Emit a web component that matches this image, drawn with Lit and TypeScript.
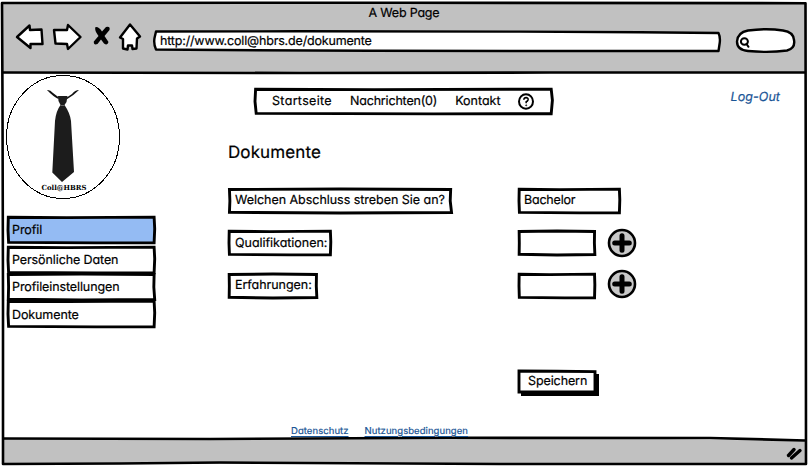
import { LitElement, html, css, svg } from "lit";
import { customElement, property } from "lit/decorators.js";

const OUTLINES: Record<string, string> = {
  a: "M0.2 2 L50 0 L99.4 2 L99.2 50 L99.8 98 L50 100 L0.2 97 L0.4 50 Z",
  b: "M0.2 1 L40 2.5 L99.4 0.5 L99.8 45 L99.4 99 L60 99.5 L0.4 97.5 L0 50 Z",
  c: "M0 0 L50 1 L100 3 L100 100 L0 100 Z",
};

/** Frame with a slightly wobbly hand-drawn outline that stretches to its content. */
@customElement("sketch-box")
export class SketchBox extends LitElement {
  @property() shape = "a";
  @property() fill = "#fff";
  static styles = css`
    :host { display: flex; align-items: center; position: relative; box-sizing: border-box; }
    svg { position: absolute; inset: 1.5px; width: calc(100% - 3px); height: calc(100% - 3px); overflow: visible; }
    path { stroke: #000; stroke-width: 2.9; stroke-linejoin: miter; vector-effect: non-scaling-stroke; }
    .content { position: relative; display: flex; align-items: center; width: 100%; }
  `;
  render() {
    return html`<svg viewBox="0 0 100 100" preserveAspectRatio="none"><path d=${OUTLINES[this.shape]} fill=${this.fill}></path></svg>
      <div class="content"><slot></slot></div>`;
  }
}

@customElement("browser-toolbar")
export class BrowserToolbar extends LitElement {
  static styles = css`
    :host { display: flex; flex-direction: column; height: 73px; box-sizing: border-box; padding: 5px 12px 0 15px; }
    .title { text-align: center; height: 17px; line-height: 18px; letter-spacing: -0.2px; margin-right: 3px; }
    .bar { display: flex; align-items: flex-start; }
    svg { display: block; flex: none; overflow: visible; }
    .ink { fill: #fff; stroke: #000; stroke-width: 2.4; stroke-linejoin: round; stroke-linecap: round; }
    .url { position: relative; width: 568px; height: 24px; margin: 7px 0 0 10px; }
    .url span { position: relative; display: block; padding-left: 7px; line-height: 25px; letter-spacing: -0.17px; }
    .url svg { position: absolute; inset: 0; }
    .search { margin: 6px 0 0 13px; }
  `;
  render() {
    return html`
      <div class="title">A Web Page</div>
      <div class="bar">
        <svg width="128" height="30" viewBox="15 22 128 30">
          <g class="ink">
            <path d="M17 37 L29.500 25.500 L30 30 L41.500 29.500 L42.500 44 L30.500 44 L30.500 48 Z"></path>
            <path d="M54 30 L67 30 L68 25 L80.500 37 L68 49 L67 44 L55.500 43.500 Z"></path>
            <path d="M130 24.500 L140 36.500 L137 38.500 L136.500 48.500 L132.500 49 L132 45.500 L128 45.500 L127.500 49.500 L123 48.500 L123 39 L120 37.500 Z"></path>
          </g>
          <path d="M95.500 27 Q99 26.500 102 31.500 L106 27 Q110.500 26 109.500 30 L104.500 36 L108.500 42 Q107.500 46 104 43.500 L101 39.500 L97.500 44 Q93.500 45.500 93.800 41.500 L98.500 36 Q94 30 95.500 27 Z"></path>
        </svg>
        <div class="url">
          <svg width="568" height="24" viewBox="153 29 568 24">
            <path class="ink" d="M156 31.500 L300 31.300 L520 31.600 L640 32.200 L718.500 33 Q720.500 37 719.700 43 L718.500 51 L560 51 L370 50.800 L220 50 L156 49.500 Q153.500 44 154.500 38 Z"></path>
          </svg>
          <span>http://www.coll@hbrs.de/dokumente</span>
        </div>
        <svg class="search" width="62" height="26" viewBox="734 28 62 26">
          <path class="ink" d="M748 30.500 Q767 28 783 30.500 Q793.500 32 794 40 Q795.500 48 787 50.500 Q769 53 748 51 Q737 50 737 41.500 Q737.500 32.500 748 30.500 Z"></path>
          <g fill="none" stroke="#000" stroke-width="2" stroke-linecap="round">
            <ellipse cx="744.400" cy="41.500" rx="3.500" ry="3.300"></ellipse>
            <path d="M746.500 44 L748.500 46.800"></path>
          </g>
        </svg>
      </div>`;
  }
}

@customElement("club-logo")
export class ClubLogo extends LitElement {
  static styles = css`
    :host { display: block; width: 116px; height: 126px; }
    svg { display: block; }
    text { font: 700 7px "DejaVu Serif", serif; }
  `;
  render() {
    return html`<svg width="116" height="126" viewBox="5 74 116 126">
      <ellipse cx="63" cy="137" rx="56.5" ry="61.5" fill="#fff" stroke="#000" shape-rendering="crispEdges"></ellipse>
      <path d="M47 90 Q50 89.500 53 93 L59 97.500 L58.500 99 Q53 96.500 47 90 Z M79 90 Q75 90 72 94 L66 98 L66.500 99.500 Q73 96 79 90 Z" fill="#111"></path>
      <path d="M58 96 L67.500 96 L66.500 102 L64.500 105 Q70 113 71 121 L74 172 L62 182 L52.300 172.500 L55 121 Q56 111 60.500 105 L58.500 101 Z" fill="#1c1c1c"></path>
      <path d="M60.500 105.500 L64.500 105.500" stroke="#777" stroke-width=".8"></path>
      <text x="41.500" y="190.300" textLength="45" lengthAdjust="spacingAndGlyphs">Coll@HBRS</text>
    </svg>`;
  }
}

@customElement("side-menu")
export class SideMenu extends LitElement {
  static styles = css`
    :host { display: flex; flex-direction: column; width: 150px; }
    sketch-box { height: 29px; }
    .item { padding: 1px 0 0 6px; letter-spacing: -0.1px; }
    .list .item { padding-top: 2px; }
    .list { display: flex; flex-direction: column; margin-top: 1px; }
    .list sketch-box + sketch-box { margin-top: -1.7px; }
  `;
  render() {
    return html`
      <sketch-box shape="b" fill="#94bbf3"><span class="item">Profil</span></sketch-box>
      <div class="list">
        ${["Persönliche Daten", "Profileinstellungen", "Dokumente"].map(
          (t, i) => html`<sketch-box shape=${i % 2 ? "a" : "b"}><span class="item">${t}</span></sketch-box>`
        )}
      </div>`;
  }
}

const plus = svg`<circle cx="15" cy="15" r="13" fill="#c8c8c8" stroke="#000" stroke-width="2.600"></circle>
  <path d="M15 7.700 V22.300 M7.700 15 H22.300" stroke="#000" stroke-width="5" stroke-linecap="round"></path>`;

@customElement("document-form")
export class DocumentForm extends LitElement {
  static styles = css`
    :host { display: grid; grid-template-columns: 290px auto; justify-content: start; grid-auto-rows: 42.5px; align-items: start; }
    sketch-box { height: 27px; }
    .label span, .value span { padding-left: 8px; white-space: nowrap; letter-spacing: -0.03px; }
    .w0 { width: 226px; }
    .w1 { width: 105px; }
    .w2 { width: 91px; }
    .value { width: 79px; }
    .wide { width: 104px; }
    .value span { padding-left: 7px; letter-spacing: -0.2px; }
    .field { display: flex; gap: 11px; height: 27px; }
    svg { display: block; margin-top: -2px; }
    .i2 svg { margin-top: -3.5px; }
  `;
  render() {
    const rows = ["Welchen Abschluss streben Sie an?", "Qualifikationen:", "Erfahrungen:"];
    return html`${rows.map(
      (label, i) => html`
        <sketch-box class="label w${i}" shape=${i % 2 ? "b" : "a"}><span>${label}</span></sketch-box>
        <div class="field i${i}">
          <sketch-box class="value ${i ? "" : "wide"}" shape=${i % 2 ? "a" : "b"}>${i ? "" : html`<span>Bachelor</span>`}</sketch-box>
          ${i ? html`<svg width="30" height="30">${plus}</svg>` : ""}
        </div>`
    )}`;
  }
}

@customElement("app-root")
export class AppRoot extends LitElement {
  static styles = css`
    :host { display: block; position: relative; width: 808px; height: 466px; overflow: hidden; background: #fff; color: #000;
      font: 12.5px Inter, "Open Sans", sans-serif; font-feature-settings: "cv11" 1;
      text-rendering: geometricPrecision; -webkit-text-stroke: 0.2px currentColor; }
    .frame { position: absolute; inset: 0; }
    .window { position: relative; display: flex; flex-direction: column; height: 466px; }
    .page { display: grid; grid-template-columns: 222px 1fr; flex: 1; padding: 1px 28px 0 5px; }
    side-menu { margin: 15px 0 0 1px; }
    .top { display: flex; justify-content: space-between; align-items: flex-start; height: 28px; padding: 13px 0 0 26px; }
    nav { width: 301px; }
    nav sketch-box { height: 28px; }
    .wide { letter-spacing: 0.33px; }
    .tight { letter-spacing: -0.18px; }
    .links { display: flex; align-items: center; gap: 18px; padding-left: 19px; }
    .links svg { margin-left: -1px; }
    .logout { color: #1a5596; font-style: italic; line-height: 21px; letter-spacing: 0.05px; }
    h1 { margin: 28px 0 0 1px; font-size: 17px; line-height: 20px; font-weight: 400; letter-spacing: 0.1px; }
    document-form { margin: 24px 0 0 0; }
    .save { width: 79px; height: 24px; margin: 55px 0 0 290px; }
    .save::before { content: ""; position: absolute; inset: 4px -3px -2px 4px; background: #000; }
    .save span { padding-left: 11px; letter-spacing: -0.1px; }
    .legal { display: flex; gap: 16px; margin: 32px 0 0 64px; font-size: 9.5px; line-height: 12px; color: #1a5596; }
    .legal span { text-decoration: underline; text-underline-offset: 2px; letter-spacing: 0.06px; }
    svg { display: block; }
  `;
  render() {
    return html`
      <svg class="frame" width="808" height="466">
        <path d="M3 3 H805 V73 H3 Z M3 438 L600 438 L805 441 V464 H3 Z" fill="#c1c1c1"></path>
        <g fill="none" stroke="#000" stroke-width="2.600" stroke-linejoin="round">
          <path d="M2 3 L400 2.700 L805.500 3.200 L805.800 200 L806 464 L500 464 L220 462.500 L120 463.500 L3 464 L3 300 L2.500 100 Z"></path>
          <path d="M3 72.500 L300 73 L550 72.500 L805 72.500"></path>
          <path d="M3 438.500 L210 439 L450 437.800 L710 438 L805 440.500"></path>
        </g>
        <g stroke="#000" stroke-width="3.400" stroke-linecap="round"><path d="M788.500 455.500 L794 449.500"></path><path d="M791.500 458 L800 450.500"></path></g>
      </svg>
      <div class="window">
        <browser-toolbar></browser-toolbar>
        <div class="page">
          <div>
            <club-logo></club-logo>
            <side-menu></side-menu>
          </div>
          <main>
            <div class="top">
              <nav><sketch-box shape="b"><div class="links">
                <span class="wide">Startseite</span><span class="tight">Nachrichten(0)</span><span>Kontakt</span>
                <svg width="16" height="17" viewBox="0 0 16 17" fill="none" stroke="#000">
                  <ellipse cx="8" cy="8.500" rx="7" ry="7.300" stroke-width="2"></ellipse>
                  <path d="M5.800 6.800 Q6 4.500 8.300 4.600 Q10.600 5 10 7 Q9.500 8.300 8.200 8.800 V10.200" stroke-width="1.600"></path>
                  <circle cx="8.200" cy="12.300" r=".5"></circle>
                </svg>
              </div></sketch-box></nav>
              <span class="logout">Log-Out</span>
            </div>
            <h1>Dokumente</h1>
            <document-form></document-form>
            <sketch-box class="save" shape="c"><span>Speichern</span></sketch-box>
            <div class="legal"><span>Datenschutz</span><span>Nutzungsbedingungen</span></div>
          </main>
        </div>
      </div>`;
  }
}
